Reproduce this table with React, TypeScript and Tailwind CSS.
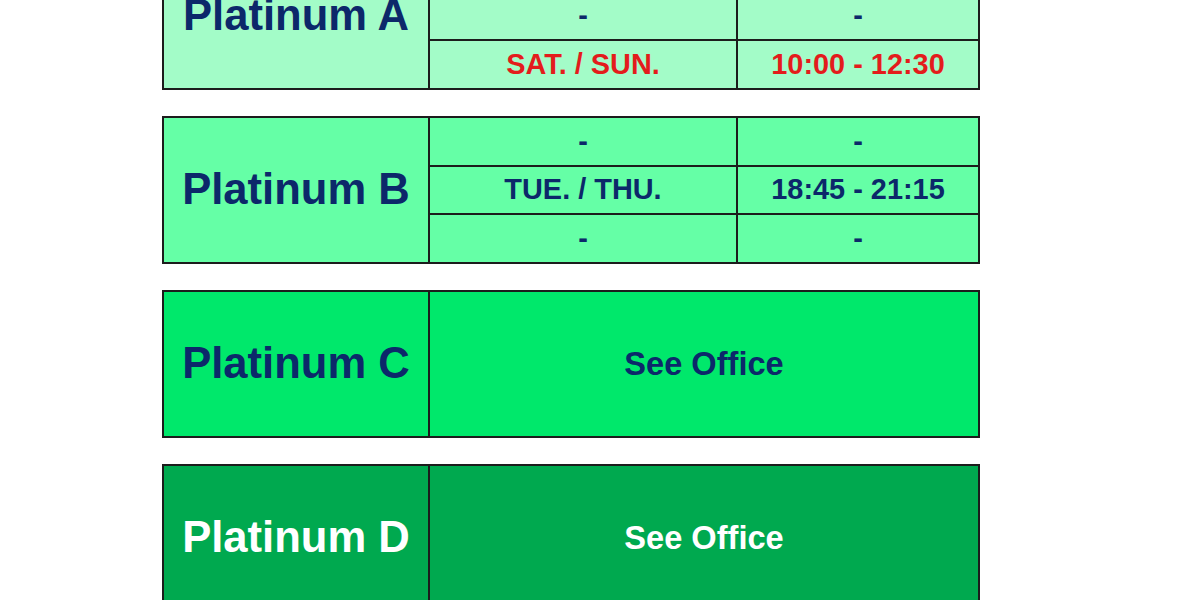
import React from "react";

const navy = "text-[#0c286a]";

function Row({ mid, right, red, last }: { mid: string; right: string; red?: boolean; last?: boolean }) {
  const color = red ? "text-[#e31c1c]" : navy;
  return (
    <div className={`flex flex-1 ${last ? "" : "border-b-2 border-[#1c1c1c]"}`}>
      <div className={`w-[308px] flex items-center justify-center border-r-2 border-[#1c1c1c] text-[28.9px] font-bold ${color}`}>{mid}</div>
      <div className={`flex-1 flex items-center justify-center text-[28.9px] font-bold ${color}`}>{right}</div>
    </div>
  );
}

function Table({ name, bg, rows, office, white }: { name: string; bg: string; rows?: { mid: string; right: string; red?: boolean }[]; office?: boolean; white?: boolean }) {
  const tc = white ? "text-white" : navy;
  return (
    <div className={`flex h-[148px] w-[818px] border-2 border-[#1c1c1c] ${bg}`}>
      <div className={`w-[266px] flex items-center justify-center border-r-2 border-[#1c1c1c] text-[43.6px] font-bold ${tc}`}>{name}</div>
      {office ? (
        <div className={`flex-1 flex items-center justify-center text-[32.6px] font-bold ${tc}`}>See Office</div>
      ) : (
        <div className="flex-1 flex flex-col">
          {rows!.map((r, i) => (
            <Row key={i} {...r} last={i === rows!.length - 1} />
          ))}
        </div>
      )}
    </div>
  );
}

export default function App() {
  return (
    <div className="w-[1200px] h-[600px] overflow-hidden bg-white" style={{ fontFamily: '"Liberation Sans", Arial, sans-serif' }}>
      <div className="flex flex-col gap-[26px] pl-[162px] mt-[-58px]">
        <Table
          name="Platinum A"
          bg="bg-[#a3fcc8]"
          rows={[
            { mid: "-", right: "-" },
            { mid: "-", right: "-" },
            { mid: "SAT. / SUN.", right: "10:00 - 12:30", red: true },
          ]}
        />
        <Table
          name="Platinum B"
          bg="bg-[#65ffa6]"
          rows={[
            { mid: "-", right: "-" },
            { mid: "TUE. / THU.", right: "18:45 - 21:15" },
            { mid: "-", right: "-" },
          ]}
        />
        <Table name="Platinum C" bg="bg-[#00e86b]" office />
        <Table name="Platinum D" bg="bg-[#00a94f]" office white />
      </div>
    </div>
  );
}
